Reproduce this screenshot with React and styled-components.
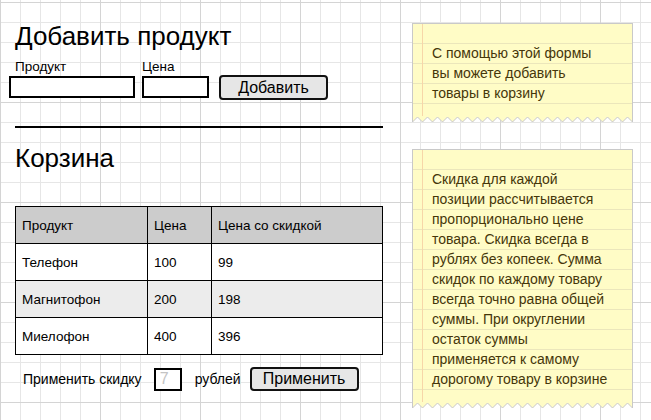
import React from "react";
import styled, { createGlobalStyle } from "styled-components";

const GlobalStyle = createGlobalStyle`
  html, body { margin: 0; padding: 0; height: 100%; }
  body {
    font-family: "Liberation Sans", Arial, Helvetica, sans-serif;
    color: #000;
    background-color: #fff;
    background-image:
      linear-gradient(to right, #d4d4d4 1px, transparent 1px),
      linear-gradient(to bottom, #d4d4d4 1px, transparent 1px),
      linear-gradient(to right, #e6e6e6 1px, transparent 1px),
      linear-gradient(to bottom, #e6e6e6 1px, transparent 1px);
    background-size: 100px 100px, 100px 100px, 20px 20px, 20px 20px;
    background-position: 0 2px;
  }
`;

const Page = styled.div`
  display: flex;
  align-items: flex-start;
  padding-top: 23px;
`;

const Main = styled.div`
  width: 368px;
  padding-left: 15px;
  display: flex;
  flex-direction: column;
`;

const Title = styled.h1`
  margin: 0;
  font-size: 26px;
  line-height: 26px;
  font-weight: normal;
  margin-top: ${(p) => p.$top || 0}px;
`;

const AddForm = styled.form`
  display: flex;
  align-items: flex-end;
  margin: 11px 0 0 -6px;
`;

const Field = styled.label`
  display: flex;
  flex-direction: column;
  margin-right: ${(p) => p.$gap}px;
`;

const FieldLabel = styled.span`
  font-size: 13.5px;
  line-height: 13px;
  margin: 0 0 3px ${(p) => p.$indent || 0}px;
`;

const TextInput = styled.input`
  box-sizing: border-box;
  width: ${(p) => p.$w}px;
  height: ${(p) => p.$h || 22}px;
  margin-right: ${(p) => p.$gap || 0}px;
  border: 2px solid #000;
  border-radius: 0;
  background: #fff;
  padding: 0 4px;
  font-family: inherit;
  font-size: 16px;
  outline: none;
  &::placeholder { color: #c4c4c4; }
`;

const Button = styled.button`
  box-sizing: border-box;
  width: 109px;
  height: ${(p) => p.$h || 25}px;
  margin-bottom: ${(p) => p.$mb || 0}px;
  border: 2px solid #111;
  border-radius: 4px;
  background: #e6e6e6;
  font-family: inherit;
  font-size: 16px;
  line-height: 1;
  color: #000;
  padding: 0;
`;

const Divider = styled.hr`
  margin: 28px 0 0;
  border: 0;
  height: 2px;
  background: #000;
`;

const CartTable = styled.table`
  margin-top: 35px;
  width: 368px;
  border-collapse: collapse;
  font-size: 13.5px;
`;

const Row = styled.tr`
  background: ${(p) => (p.$head ? "#cccccc" : p.$alt ? "#ececec" : "#ffffff")};
`;

const Cell = styled.td`
  border: 1px solid #000;
  height: 37px;
  padding: 0 7px 0 6px;
  width: ${(p) => (p.$w ? `${p.$w}px` : "auto")};
  font-weight: normal;
  text-align: left;
  box-sizing: border-box;
`;

const DiscountRow = styled.div`
  display: flex;
  align-items: center;
  margin-top: 12px;
  padding-left: 8px;
  font-size: 14px;
`;

const DiscountText = styled.span`
  margin-right: ${(p) => p.$gap}px;
`;

const Aside = styled.aside`
  margin-left: 29px;
  width: 221px;
  display: flex;
  flex-direction: column;
  gap: 26px;
`;

const Note = styled.div`
  position: relative;
`;

const NoteBody = styled.div`
  box-sizing: border-box;
  border: 1px solid #c9c9c9;
  border-bottom: 0;
  padding: 19px 8px 13px 19px;
  background-color: #fffcc6;
  background-image:
    linear-gradient(to right, transparent 9px, #f7d6a8 9px, #f7d6a8 10px, transparent 10px),
    linear-gradient(to bottom, transparent 19px, #ebe6bb 19px, #ebe6bb 20px);
  background-size: 100% 100%, 100% 20px;
  background-repeat: no-repeat, repeat;
  font-size: 14px;
  line-height: 20px;
  color: #45360a;
  white-space: nowrap;
`;

const TearSvg = styled.svg`
  display: block;
  width: 221px;
  height: 7px;
`;

function Tear() {
  const W = 221;
  const pts = [];
  for (let x = 0; x <= W; x += 10) {
    pts.push(`${x + 0.5},6`);
    if (x + 5 <= W) pts.push(`${x + 5.5},1`);
  }
  pts.push(`${W - 0.5},5`);
  const line = `0.5,0 ${pts.join(" ")} ${W - 0.5},0`;
  return (
    <TearSvg viewBox={`0 0 ${W} 7`}>
      <polygon points={line} fill="#fffcc6" />
      <polyline points={line} fill="none" stroke="#c9c9c9" strokeWidth="1" />
    </TearSvg>
  );
}

const rows = [
  { name: "Телефон", price: 100, disc: 99 },
  { name: "Магнитофон", price: 200, disc: 198 },
  { name: "Миелофон", price: 400, disc: 396 },
];

export default function App() {
  return (
    <>
      <GlobalStyle />
      <Page>
        <Main>
          <Title>Добавить продукт</Title>
          <AddForm onSubmit={(e) => e.preventDefault()}>
            <Field $gap={7}>
              <FieldLabel $indent={6}>Продукт</FieldLabel>
              <TextInput $w={126} />
            </Field>
            <Field $gap={10}>
              <FieldLabel>Цена</FieldLabel>
              <TextInput $w={67} />
            </Field>
            <Button type="submit" $mb={-2}>Добавить</Button>
          </AddForm>
          <Divider />
          <Title as="h2" $top={17}>Корзина</Title>
          <CartTable>
            <thead>
              <Row $head>
                <Cell as="th" $w={132}>Продукт</Cell>
                <Cell as="th" $w={64}>Цена</Cell>
                <Cell as="th">Цена со скидкой</Cell>
              </Row>
            </thead>
            <tbody>
              {rows.map((r, i) => (
                <Row key={r.name} $alt={i === 1}>
                  <Cell>{r.name}</Cell>
                  <Cell>{r.price}</Cell>
                  <Cell>{r.disc}</Cell>
                </Row>
              ))}
            </tbody>
          </CartTable>
          <DiscountRow>
            <DiscountText $gap={12}>Применить скидку</DiscountText>
            <TextInput $w={28} $h={23} $gap={13} placeholder="7" />
            <DiscountText $gap={9}>рублей</DiscountText>
            <Button $h={24}>Применить</Button>
          </DiscountRow>
        </Main>
        <Aside>
          <Note>
            <NoteBody>
              С помощью этой формы<br />
              вы можете добавить<br />
              товары в корзину
            </NoteBody>
            <Tear />
          </Note>
          <Note>
            <NoteBody>
              Скидка для каждой<br />
              позиции рассчитывается<br />
              пропорционально цене<br />
              товара. Скидка всегда в<br />
              рублях без копеек. Сумма<br />
              скидок по каждому товару<br />
              всегда точно равна общей<br />
              суммы. При округлении<br />
              остаток суммы<br />
              применяется к самому<br />
              дорогому товару в корзине
            </NoteBody>
            <Tear />
          </Note>
        </Aside>
      </Page>
    </>
  );
}
